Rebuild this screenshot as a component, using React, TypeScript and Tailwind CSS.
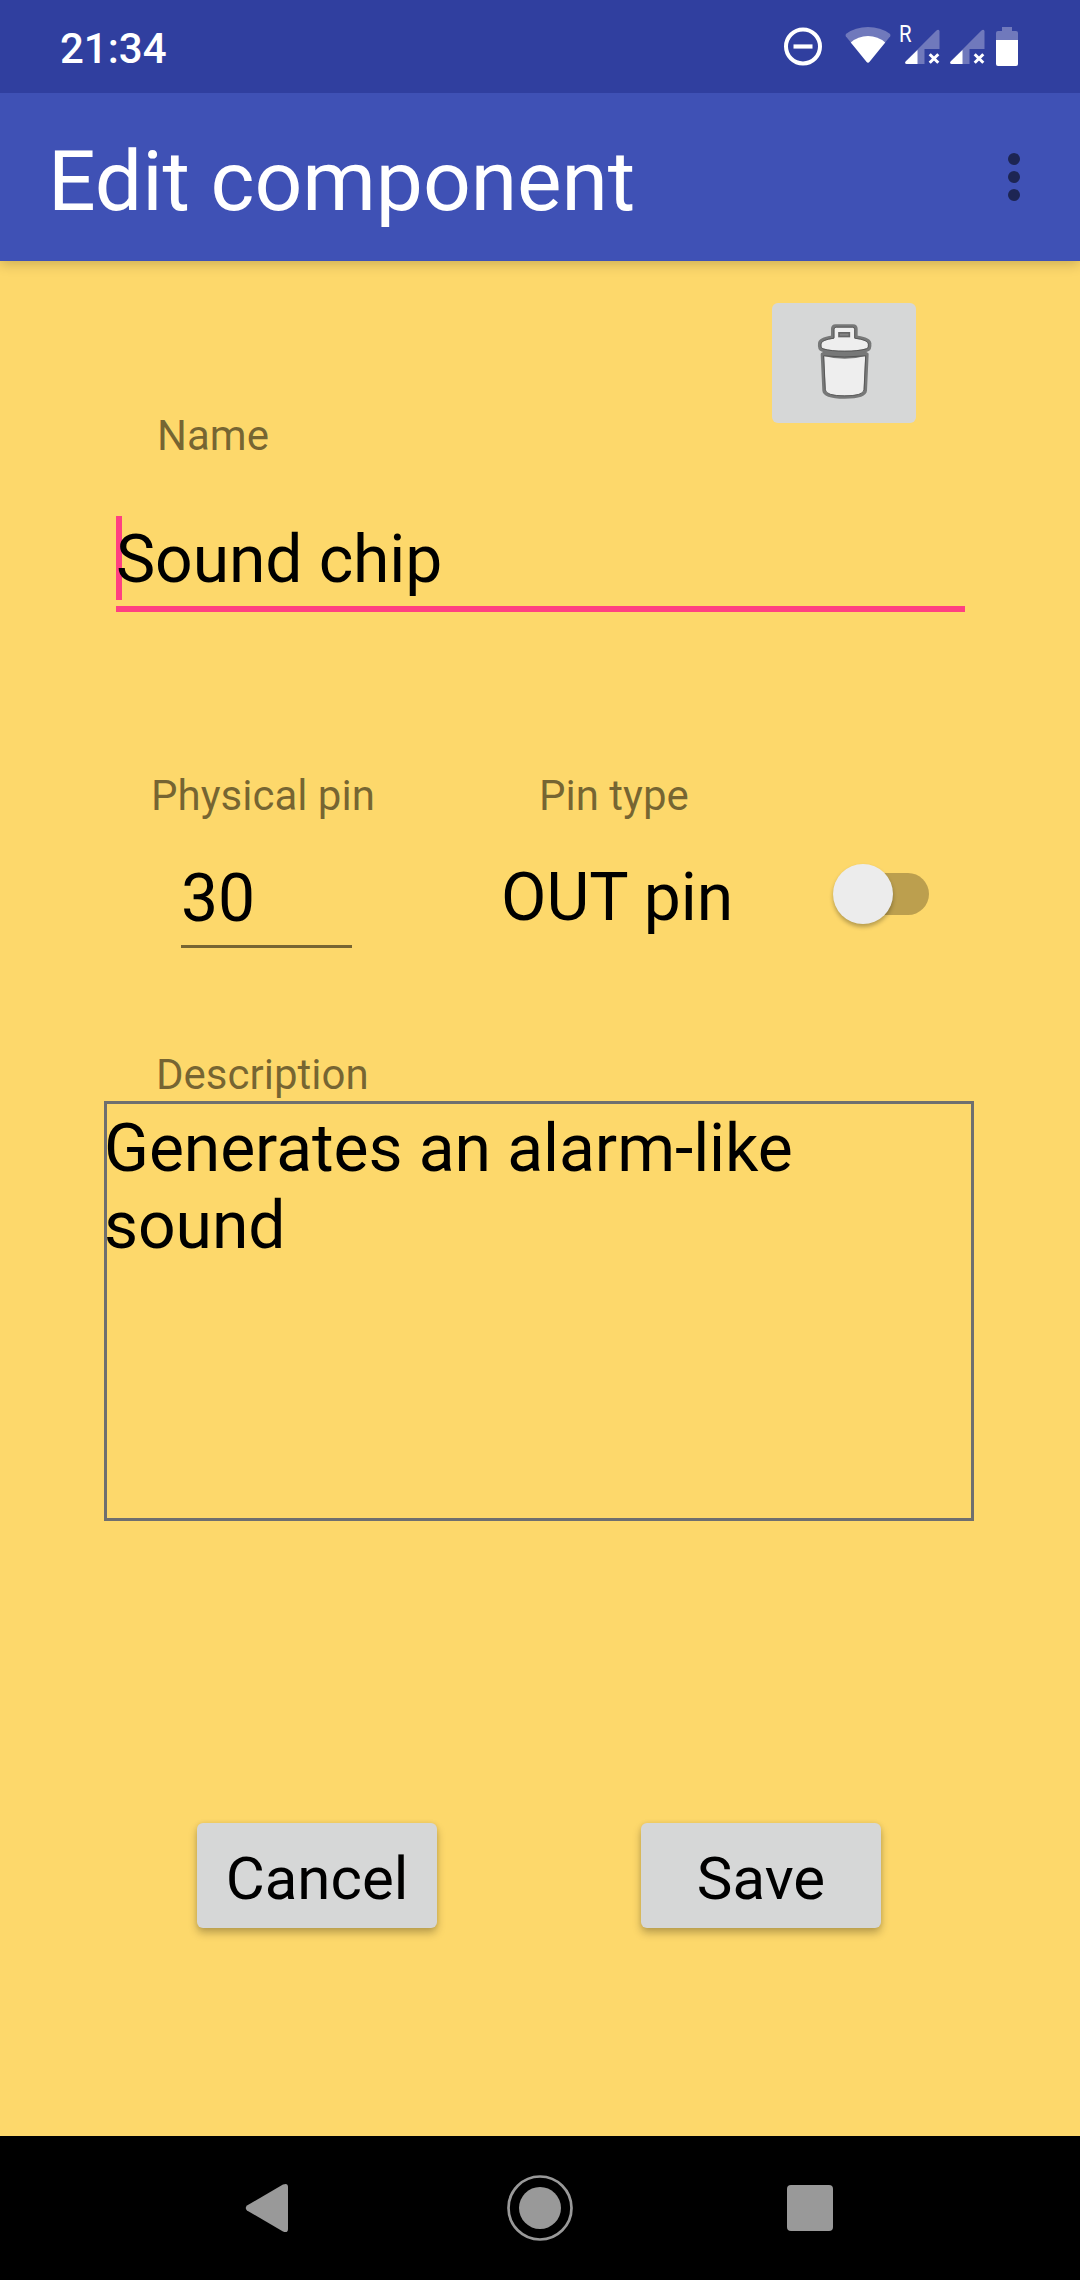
import type { ReactNode } from "react";

function SignalIcon() {
  return (
    <svg width="36" height="36" viewBox="0 0 36 36" className="shrink-0">
      <path d="M0.8 35 Q-0.6 34.2 0.5 32.6 L31.2 1.7 Q33.5 -0.2 34.5 2 V20 H19.5 V35 Z" fill="#7079bc" />
      <path d="M12.5 21 V35 H1.6 Q-0.8 34.4 0.7 32.5 Z" fill="#fff" />
      <path d="M24.7 25.2 L33.3 33.8 M33.3 25.2 L24.7 33.8" stroke="#fff" strokeWidth="3" />
    </svg>
  );
}

function StatusBar() {
  return (
    <header className="relative z-10 flex h-[93px] items-start justify-between bg-[#303f9f] pl-[60px] pr-[62px] text-white">
      <span className="mt-[24px] text-[42px] font-medium leading-[49px]">21:34</span>
      <div className="mt-[24px] flex h-[46px]">
        <svg width="40" height="46" viewBox="0 0 40 46" className="mr-[22px]">
          <circle cx="20" cy="22.5" r="17" fill="none" stroke="#fff" strokeWidth="4" />
          <path d="M10.5 22.5 H29.5" stroke="#fff" strokeWidth="4.2" />
        </svg>
        <svg width="46" height="46" viewBox="0 0 46 46" className="mr-[10px]">
          <path d="M0.8 12.3 Q0 10.9 1.2 9.7 Q10.5 3 23 3 Q35.5 3 44.8 9.7 Q46 10.9 45.2 12.3 L40.2 18.5 L23 36 L5.8 18.5 Z" fill="#7079bc" />
          <path d="M5.8 18.5 Q13 12 23 12 Q33 12 40.2 18.5 L24.6 37.8 Q23 39.6 21.4 37.8 Z" fill="#fff" />
        </svg>
        <div className="relative mr-[9px] pl-[4px] pt-[5px]">
          <span className="absolute left-[-2px] top-[-4px] origin-left scale-x-[0.85] text-[24px] leading-[28px]">R</span>
          <SignalIcon />
        </div>
        <div className="mr-[10px] pt-[5px]">
          <SignalIcon />
        </div>
        <svg width="22" height="46" viewBox="0 0 22 46">
          <path d="M6 3 H16 V7 H20 Q22 7 22 9 V16 H0 V9 Q0 7 2 7 H6 Z" fill="#7079bc" />
          <path d="M0 16 H22 V40 Q22 42 20 42 H2 Q0 42 0 40 Z" fill="#fff" />
        </svg>
      </div>
    </header>
  );
}

function AppBar() {
  return (
    <div className="relative flex h-[168px] items-start justify-between bg-[#3f51b5] pl-[48px] pr-[60px] shadow-[0_3px_12px_rgba(0,0,0,0.2)]">
      <h1 className="mt-[39px] text-[84px] leading-[99px] tracking-[-0.1px] text-white">Edit component</h1>
      <button aria-label="More options" className="mt-[60px] flex flex-col gap-[6px]">
        <span className="size-[12px] rounded-full bg-[#1d2553]" />
        <span className="size-[12px] rounded-full bg-[#1d2553]" />
        <span className="size-[12px] rounded-full bg-[#1d2553]" />
      </button>
    </div>
  );
}

function TrashIcon() {
  return (
    <svg width="144" height="120" viewBox="96 68.5 432 360">
      <g fill="#eeeeee" stroke="#777878" strokeWidth="10" strokeLinejoin="round">
        <path d="M247 222 L252 331 Q253 351 314 351 Q375 351 376 331 L381 222 Z" />
        <path d="M247 219 Q314 238 381 219" fill="none" strokeWidth="14" />
        <path d="M278 171 V146 Q278 137 287 137 H339 Q348 137 348 146 V171 Q389 176 389 190 Q391 207 382 209 Q355 217 314 217 Q273 217 246 209 Q237 207 239 190 Q239 176 278 171 Z" />
        <rect x="297" y="158" width="31" height="11" fill="#858585" stroke="#666" strokeWidth="5" strokeLinejoin="miter" />
      </g>
      <g fill="none" stroke="#4e4e4e" strokeWidth="2.5">
        <path d="M251 227 L256 329 Q258 347 314 347 Q370 347 372 329 L377 227 Q314 234 251 227" />
        <path d="M282 174 V148 Q282 141 289 141 H337 Q344 141 344 148 V174 Q386 180 385 192 Q387 204 379 206 Q355 213 314 213 Q273 213 249 206 Q241 204 243 192 Q242 180 282 174" />
      </g>
    </svg>
  );
}

function Label({ children, className }: { children: ReactNode; className: string }) {
  return <span className={"block whitespace-nowrap text-[42px] leading-[49px] text-black/54 " + className}>{children}</span>;
}

function ActionButton({ children }: { children: ReactNode }) {
  return (
    <button className="h-[105px] w-[240px] rounded-[6px] bg-[#d6d7d7] pt-[5px] text-[60px] leading-[71px] text-black shadow-[0_5px_8px_rgba(0,0,0,0.26),0_0_5px_rgba(0,0,0,0.08)]">
      {children}
    </button>
  );
}

function Form() {
  return (
    <main className="flex flex-1 flex-col">
      <div className="flex h-[255px] items-start pl-[157px] pt-[42px]">
        <Label className="mt-[108px] w-[615px]">Name</Label>
        <button aria-label="Delete" className="h-[120px] w-[144px] rounded-[6px] bg-[#d6d7d7]">
          <TrashIcon />
        </button>
      </div>

      <div className="relative ml-[116px] h-[96px] w-[849px] border-b-[6px] border-[#ff4081] pt-[5px]">
        <span className="absolute left-0 top-0 h-[84px] w-[6px] bg-[#ff4081]" />
        <span className="relative block text-[66px] leading-[77px] tracking-[-0.1px]">Sound chip</span>
      </div>

      <div className="mt-[159px] flex">
        <Label className="ml-[151px] w-[388px]">Physical pin</Label>
        <Label className="">Pin type</Label>
      </div>
      <div className="mt-[40px] flex h-[88px] items-start text-[66px] leading-[77px]">
        <div className="ml-[181px] h-[88px] w-[171px] border-b-[3px] border-[#776532]">30</div>
        <span className="ml-[149px] mt-[-1px] w-[332px] whitespace-nowrap">OUT pin</span>
        <div role="switch" aria-checked="false" className="mt-[4px] flex h-[60px] w-[96px] items-center">
          <div className="ml-[6px] flex h-[42px] w-[90px] items-center rounded-full bg-[#bc9f4e]">
            <span className="ml-[-6px] size-[60px] shrink-0 rounded-full bg-[#ececec] shadow-[0_3px_4px_rgba(0,0,0,0.28)]" />
          </div>
        </div>
      </div>

      <Label className="ml-[156px] mt-[102px]">Description</Label>
      <div className="ml-[104px] mt-[2px] h-[420px] w-[870px] border-[3px] border-[#6f6f6f] pt-[6px]">
        <p className="-ml-[3px] w-[800px] text-[66px] leading-[77.3px] tracking-[-0.07px]">
          Generates an alarm-like
          <br />
          sound
        </p>
      </div>

      <div className="mt-[302px] flex gap-[204px] pl-[197px]">
        <ActionButton>Cancel</ActionButton>
        <ActionButton>Save</ActionButton>
      </div>
    </main>
  );
}

function NavBar() {
  return (
    <nav className="flex h-[144px] items-center justify-center gap-[204px] bg-black">
      <svg width="66" height="66" viewBox="0 0 66 66">
        <path d="M10 30.5 L46 9.5 Q51 7.5 51 12 V54 Q51 58.5 46 56.5 L10 35.5 Q7.5 33 10 30.5 Z" fill="#999" />
      </svg>
      <svg width="66" height="66" viewBox="0 0 66 66">
        <circle cx="33" cy="33" r="31.5" fill="none" stroke="#999" strokeWidth="2.7" />
        <circle cx="33" cy="33" r="21" fill="#999" />
      </svg>
      <svg width="66" height="66" viewBox="0 0 66 66">
        <rect x="10" y="10" width="46" height="46" rx="4" fill="#999" />
      </svg>
    </nav>
  );
}

export default function App() {
  return (
    <div className="flex h-[2280px] w-[1080px] flex-col overflow-hidden bg-[#fdd86b] font-['Roboto',sans-serif] text-black">
      <StatusBar />
      <AppBar />
      <Form />
      <NavBar />
    </div>
  );
}
